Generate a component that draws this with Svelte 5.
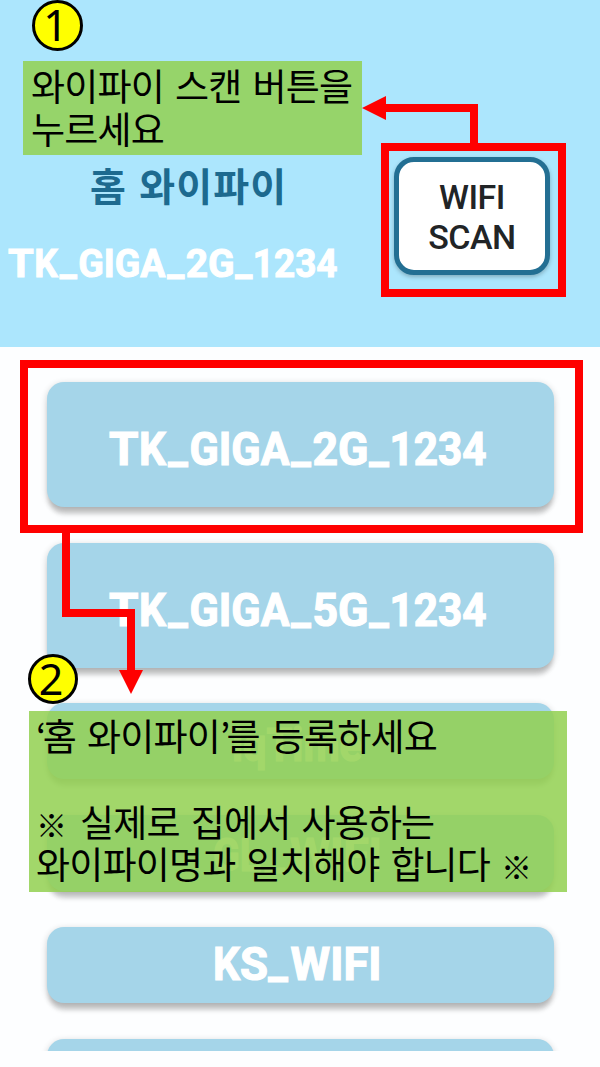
<script>
  // Each run of a network name: text, left edge, advance width, vertical shift.
  const giga = (band) => [
    ['T', 0, 29.5, 0], ['K', 30, 27, 0], ['_', 59.3, 19.5, -3], ['GIGA', 80.5, 100, 0], ['_', 182.3, 19.5, -3],
    [band, 203.5, 56, 0], ['_', 260.3, 19.5, -3], ['1234', 280.5, 97, 0]
  ];
  const networks = [
    { name: 'TK_GIGA_2G_1234', runs: giga('2G'), width: 377, drop: 13, tall: true },
    { name: 'TK_GIGA_5G_1234', runs: giga('5G'), width: 377, drop: 13, tall: true },
    { name: 'iqTime', runs: [['iqTime', 0, 130, 0]], width: 130, drop: 12 },
    { name: 'GL_WIFI', runs: [['GL', 0, 48, 0], ['_', 52, 19.5, -3], ['WIFI', 77, 92, 0]], width: 169, drop: 8 },
    { name: 'KS_WIFI', runs: [['K', 0, 27, 0], ['S', 27, 28, 0], ['_', 55.3, 19.5, -3], ['WIFI', 77.5, 91, 0]], width: 169, drop: 2 },
    { name: '', runs: [], width: 0, drop: 0 }
  ];
</script>

{#snippet label(runs, width, scale)}
  <svg class="name" width={width * scale} height={48 * scale} viewBox="0 0 {width} 48">
    {#each runs as [text, x, w, dy]}
      <text {x} y={38 + dy} textLength={w} lengthAdjust="spacingAndGlyphs">{text}</text>
    {/each}
  </svg>
{/snippet}

<main>
  <header>
    <div class="home">
      <h1>홈 와이파이</h1>
      {@render label(giga('2G'), 377, 0.873)}
    </div>
    <button>WIFI<br />SCAN</button>
  </header>

  <section class="list">
    {#each networks as n}
      <div class="card" class:tall={n.tall} style="padding-top: {n.drop}px">
        {#if n.name}{@render label(n.runs, n.width, 1)}{/if}
      </div>
    {/each}
  </section>

  <svg class="guide" width="600" height="1067" viewBox="0 0 600 1067">
    <g fill="none" stroke="#f00" stroke-width="8">
      <rect x="385" y="147" width="177" height="146" />
      <path d="M474 147V108H385" />
      <rect x="24" y="364" width="555" height="165" />
      <path d="M66 529V613H131V671" />
    </g>
    <path fill="#f00" d="M362 108L386 96V120ZM131 694L119 670H143Z" />
  </svg>

  <div class="note first">
    <p>와이파이 스캔 버튼을</p>
    <p>누르세요</p>
  </div>
  <div class="note second">
    <p><span class="quote">‘</span>홈 와이파이<span class="quote">’</span>를 등록하세요</p>
    <p>&nbsp;</p>
    <p><span class="mark">※</span> 실제로 집에서 사용하는</p>
    <p>와이파이명과 일치해야 합니다 <span class="mark">※</span></p>
  </div>
  <div class="step one">1</div>
  <div class="step two">2</div>
</main>

<style>
  :global(body) { margin: 0; background: #fdfeff; }
  main {
    position: relative;
    width: 600px;
    height: 1067px;
    overflow: hidden;
    background: #fdfeff;
    font-family: "Noto Sans CJK KR", sans-serif;
  }
  header {
    box-sizing: border-box;
    height: 347px;
    background: #ace6fd;
    display: flex;
    align-items: flex-start;
    justify-content: space-between;
    padding: 157px 50px 0 8px;
  }
  .home { display: flex; flex-direction: column; }
  h1 {
    margin: -2px 0 0 82px;
    font-size: 39px;
    line-height: 58px;
    font-weight: 700;
    letter-spacing: 1.2px;
    word-spacing: 2px;
    color: #1d6a8f;
    white-space: nowrap;
  }
  .home .name { margin-top: 31px; }
  button {
    box-sizing: border-box;
    width: 156px;
    height: 118px;
    padding: 4px 0 0;
    border: 5px solid #236f93;
    border-radius: 20px;
    background: #fff;
    box-shadow: 0 2px 4px rgba(0, 0, 0, .25);
    font: 500 34px/39.6px Roboto, sans-serif;
    letter-spacing: -.5px;
    color: #212426;
  }
  .list {
    box-sizing: border-box;
    height: 703.5px;
    overflow: hidden;
    padding: 35px 46.5px 0;
    display: flex;
    flex-direction: column;
    gap: 35.6px;
  }
  .card {
    box-sizing: border-box;
    flex: none;
    height: 76.2px;
    display: flex;
    align-items: center;
    justify-content: center;
    padding-right: 6px;
    border-radius: 17px;
    background: #a5d5e9;
    box-shadow: 0 9px 5px -2px rgba(0, 0, 0, .18), 0 2px 7px rgba(0, 0, 0, .2);
  }
  .card.tall { height: 125px; }
  .name { display: block; overflow: visible; }
  .name text {
    font: 700 45.5px Roboto, sans-serif;
    fill: #fff;
    stroke: #fff;
    stroke-width: 1.2;
  }
  .guide { position: absolute; left: 0; top: 0; }
  .note {
    position: absolute;
    box-sizing: border-box;
    background: rgba(146, 208, 80, .85);
    color: #000;
    font-size: 37px;
    line-height: 42.8px;
    letter-spacing: -.8px;
    word-spacing: 3.5px;
    white-space: nowrap;
  }
  .note p { margin: 0; height: 42.8px; }
  .quote { letter-spacing: -3.6px; }
  .mark { font-size: 31px; letter-spacing: 2px; line-height: 1; }
  .first { left: 23px; top: 61px; width: 339px; height: 94px; padding: 3px 0 0 8px; }
  .second { left: 29px; top: 711px; width: 538px; height: 181px; padding: 3px 0 0 7px; }
  .step {
    position: absolute;
    box-sizing: border-box;
    width: 51px;
    height: 51px;
    padding-right: 4px;
    border: 3px solid #000;
    border-radius: 50%;
    background: #ff0;
    font: 400 43px/43px "Noto Sans", sans-serif;
    text-align: center;
  }
  .one { left: 32px; top: 0; }
  .two { left: 28px; top: 654px; width: 50px; height: 50px; }
</style>
